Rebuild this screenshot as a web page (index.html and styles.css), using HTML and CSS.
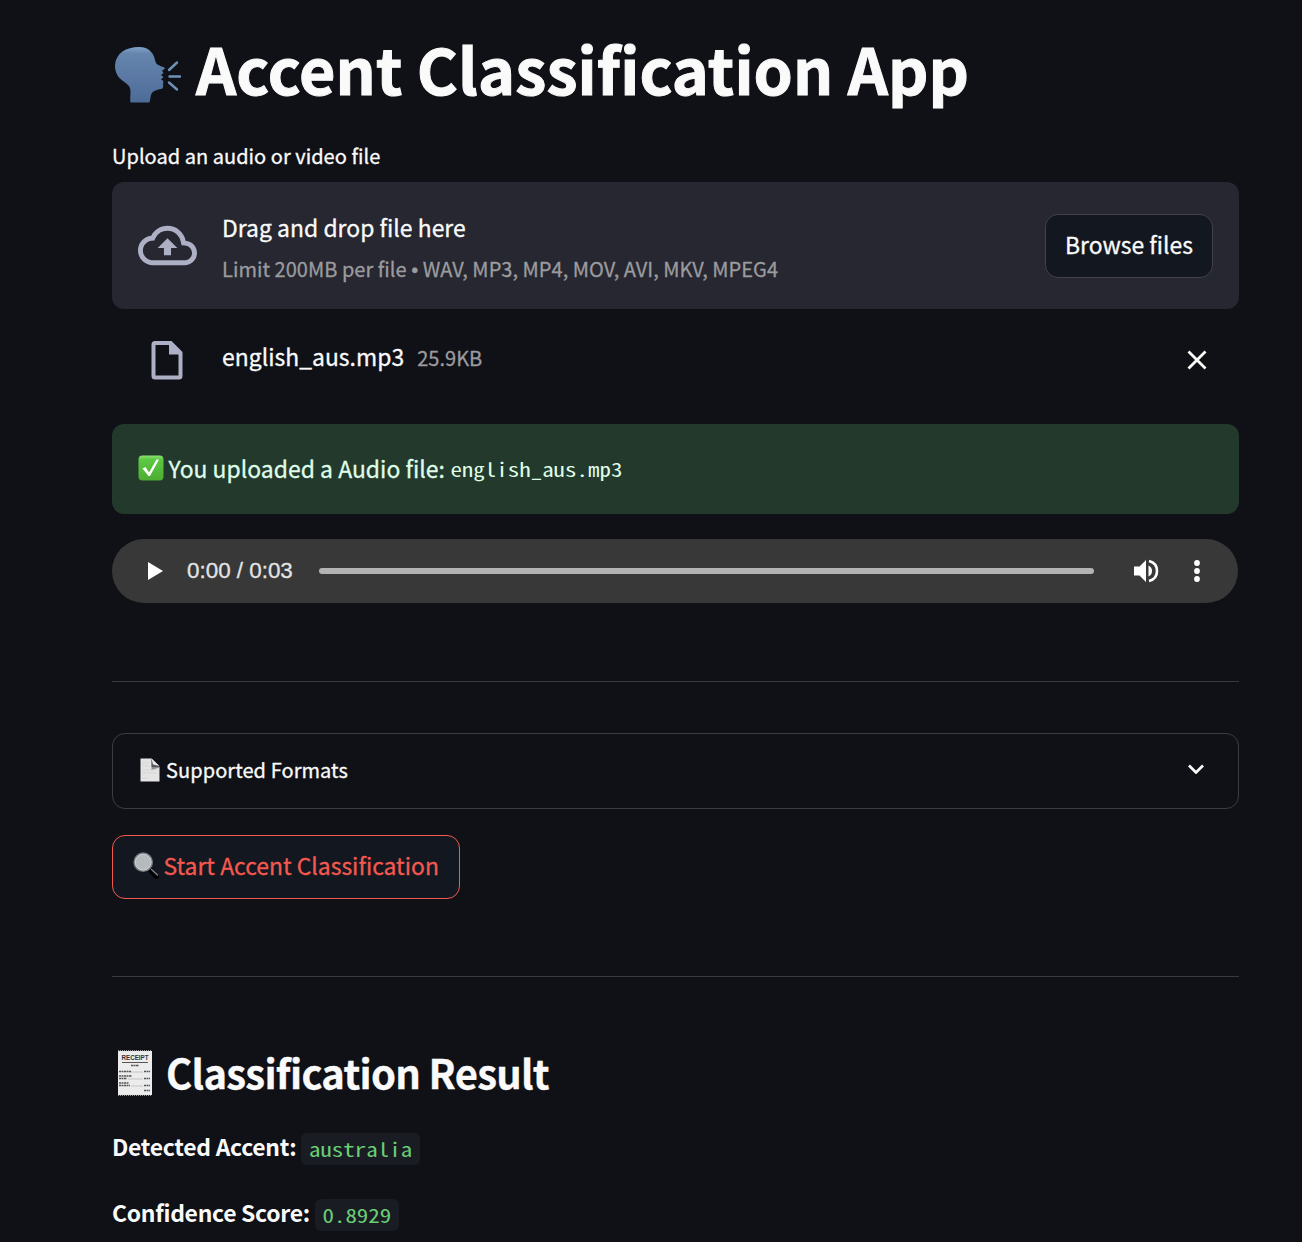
FILE: index.html
```html
<!DOCTYPE html>
<html lang="en">
<head>
<meta charset="utf-8">
<title>Accent Classification App</title>
<link rel="stylesheet" href="styles.css">
</head>
<body>
<main class="page">
  <h1 class="title">
    <svg class="title-icon" viewBox="0 0 72 62" aria-hidden="true">
      <defs><linearGradient id="head" x1="0" y1="0" x2="0" y2="1"><stop offset="0" stop-color="#7fa3cb"/><stop offset=".12" stop-color="#6685ad"/><stop offset="1" stop-color="#4d6b98"/></linearGradient></defs>
      <path fill="url(#head)" d="M27 2C37 2 42 8 43.500 17C44.500 20 49 21 52.500 22.500C53.500 23.500 51.500 25 50 25.500L51.500 28L49 30L51.500 32L49 34.500L51.500 36C50.500 39 52 42 50.500 43.500C45 45 41 45 39 50L37.500 57.500H18.500C17.500 51 20 46 17 41C12 35 3 34 3 20C4 8 14 2 27 2Z"/>
      <path fill="none" stroke="#6e92bb" stroke-width="2.400" stroke-linecap="round" d="M57 25L65 17.500M57.500 31.500H68M57 37.500L65 44.500"/>
    </svg>
    <span class="title-text">Accent Classification App</span>
  </h1>

  <p class="upload-label"><span>Upload an audio or video file</span></p>
  <section class="dropzone">
    <svg class="cloud" viewBox="0 0 24 24" aria-hidden="true"><path d="M19.350 10.040A7.490 7.490 0 0 0 12 4C9.110 4 6.600 5.640 5.350 8.040A5.994 5.994 0 0 0 0 14c0 3.310 2.690 6 6 6h13c2.760 0 5-2.240 5-5 0-2.640-2.050-4.780-4.650-4.960zM19 18H6c-2.210 0-4-1.790-4-4 0-2.050 1.530-3.760 3.560-3.970l1.070-.110.500-.950A5.469 5.469 0 0 1 12 6c2.620 0 4.880 1.860 5.390 4.430l.300 1.500 1.530.110A2.980 2.980 0 0 1 22 15c0 1.650-1.350 3-3 3zM8 13h2.550v3h2.900v-3H16l-4-4z"/></svg>
    <div class="drop-text">
      <span class="drop-main">Drag and drop file here</span>
      <span class="drop-limit">Limit 200MB per file <span class="bullet">•</span> WAV, MP3, MP4, MOV, AVI, MKV, MPEG4</span>
    </div>
    <button class="browse"><span>Browse files</span></button>
  </section>

  <div class="file-row">
    <svg class="file-icon" viewBox="0 0 32 40" aria-hidden="true"><path fill-rule="evenodd" d="M4 1H20.500L31.500 12V36Q31.500 39.500 28 39.500H4Q.500 39.500 .500 36V4.500Q.500 1 4 1ZM4.500 5V35.500H27.500V14.500H18V5Z"/></svg>
    <span class="file-name">english_aus.mp3</span>
    <span class="file-size">25.9KB</span>
    <svg class="close" viewBox="0 0 20 20" aria-hidden="true"><path d="M1.500 1.500L18.500 18.500M18.500 1.500L1.500 18.500"/></svg>
  </div>

  <div class="success">
    <svg class="check" viewBox="0 0 26 26" aria-hidden="true">
      <defs><linearGradient id="green" x1="0" y1="0" x2="0" y2="1"><stop offset="0" stop-color="#8be474"/><stop offset=".15" stop-color="#5dc944"/><stop offset="1" stop-color="#4bad31"/></linearGradient></defs>
      <rect x=".500" y=".500" width="25" height="25" rx="4" fill="url(#green)"/>
      <path fill="#fff" d="M4.500 13.500L7.500 12L11 17.500L18.500 4.500H21L12 21H10.500Z"/>
    </svg>
    <span class="success-text">You uploaded a Audio file:</span>
    <code class="success-code"><span class="mono">english_aus.mp3</span></code>
  </div>

  <div class="player">
    <svg class="play" viewBox="0 0 15 18" aria-hidden="true"><path d="M0 0L15 9L0 18Z"/></svg>
    <span class="time">0:00 / 0:03</span>
    <div class="track"></div>
    <svg class="volume" viewBox="0 0 25 24" aria-hidden="true"><path d="M0 7.500H5.500L12 1V23L5.500 16.500H0Z"/><path d="M14.500 6.500Q18 8 18 12T14.500 17.500Z"/><path class="wave" d="M15 2Q23 4 23 12T15 22"/></svg>
    <svg class="more" viewBox="0 0 6 22" aria-hidden="true"><circle cx="3" cy="3" r="2.900"/><circle cx="3" cy="11" r="2.900"/><circle cx="3" cy="19" r="2.900"/></svg>
  </div>

  <hr class="rule rule-first">

  <div class="expander">
    <svg class="doc" viewBox="0 0 20 24" aria-hidden="true">
      <path fill="#e4e4e4" d="M.500 .500H11.500L19.500 9V23.500H.500Z"/>
      <path fill="#8c8c8c" d="M11.500 1V12L19.500 9.500Z"/><path fill="#55585b" d="M11.500 1V9H19.500Z"/><path fill="#e9e9e9" d="M11.500 .500L19.500 8L13 6.500Z"/>
      <path stroke="#d0d0d0" stroke-width=".700" d="M2 5H9M2 8H9M2 12H17M2 15H17M2 20H8"/>
    </svg>
    <span class="expander-text">Supported Formats</span>
    <svg class="chevron" viewBox="0 0 16 10" aria-hidden="true"><path d="M1 1.500L8 8.500L15 1.500"/></svg>
  </div>

  <button class="start">
    <svg class="lens" viewBox="0 0 26 27" aria-hidden="true">
      <path stroke="#000" stroke-width="4.800" stroke-linecap="round" d="M18 19L23.500 24.500"/><path stroke="#858a8e" stroke-width="1.300" stroke-linecap="round" d="M18.500 17.500L24.500 23"/>
      <circle cx="10.200" cy="10.200" r="9" fill="#b7babd" stroke="#71777d" stroke-width="1.800"/><circle cx="10.200" cy="10.200" r="8" fill="none" stroke="#d9dcde" stroke-width=".800"/>
    </svg>
    <span class="start-text">Start Accent Classification</span>
  </button>

  <hr class="rule rule-second">

  <h2 class="result-title">
    <svg class="receipt" viewBox="0 0 36 46" aria-hidden="true">
      <rect x="1" y="1" width="34" height="44" fill="#ececec"/><path fill="none" stroke="#b9b9b9" stroke-width="1" stroke-dasharray="1 1" d="M1 .700H35M1 45.300H35"/>
      <text x="4.500" y="9.500" textLength="27" lengthAdjust="spacingAndGlyphs">RECEIPT</text>
      <path stroke="#555" stroke-width="1" d="M5 12.500H31"/>
      <path stroke="#555" stroke-width="1.300" stroke-dasharray="2 .500" d="M14 15.500H22M2 21.500H14M27 21.500H33M2 26H15M2 28.500H10M27 28.500H33M2 33H12M2 35.500H13M27 35.500H33M27 40.500H33"/>
      <path stroke="#bbb" stroke-width=".800" d="M14 22H26M11 29H26M14 36H26"/>
    </svg>
    <span class="result-text">Classification Result</span>
  </h2>
  <p class="result-row"><strong class="accent-label">Detected Accent:</strong><code class="chip"><span class="mono">australia</span></code></p>
  <p class="result-row"><strong class="score-label">Confidence Score:</strong><code class="chip"><span class="mono">0.8929</span></code></p>
</main>
</body>
</html>
```
FILE: styles.css
```css
* { box-sizing: border-box; }
html { background: #0f1116; }
body {
  margin: 0;
  height: 1242px;
  overflow: hidden;
  background: #0f1116;
  color: #fafafa;
  font-family: "Noto Sans CJK SC", "Noto Sans", sans-serif;
  font-size: 22.9px;
  letter-spacing: .03px;
  -webkit-text-stroke: .3px currentColor;
}
.page { display: flex; flex-direction: column; width: 1127px; margin-left: 112px; }
h1, h2, p { margin: 0; }
svg { display: block; flex: none; }
span, strong, code { white-space: nowrap; }
button { font: inherit; color: inherit; letter-spacing: 0; }
code { font-family: "Noto Sans Mono CJK SC", "Liberation Mono", monospace; font-size: 22.95px; line-height: 32px; letter-spacing: 0; -webkit-text-stroke: 0; }
/* flattens the tall condensed glyphs to a wider code face */
.mono { display: block; transform: scaleY(.82); }

.title { display: flex; align-items: center; height: 142px; -webkit-text-stroke: 1px currentColor; }
.title-icon { width: 72px; height: 62px; margin-top: 10px; }
.title-text { margin: 0 0 7px 12px; font-size: 62.8px; line-height: 84px; font-weight: 700; letter-spacing: .1px; }

.upload-label { height: 40px; font-size: 20px; line-height: 27px; }

.dropzone { display: flex; align-items: center; height: 127px; padding: 0 26px; border-radius: 12px; background: #262730; }
.cloud { width: 59px; height: 59px; fill: #adb0c4; }
.drop-text { display: flex; flex-direction: column; flex: 1; margin: 5px 0 0 25px; }
.drop-main { line-height: 41px; }
.drop-limit { font-size: 20px; line-height: 41px; color: #9b9b9f; }
.bullet { font-family: "Liberation Sans", sans-serif; line-height: 1; }
.browse { width: 168px; height: 64px; padding: 0 0 4px; border: 1px solid #41424b; border-radius: 13px; background: #131720; }

.file-row { display: flex; align-items: center; height: 102px; padding: 0 32px 0 39px; }
.file-icon { width: 32px; height: 40px; fill: #adb0c4; }
.file-name { margin-left: 39px; line-height: 34px; margin-bottom: 8px; }
.file-size { margin-left: 13px; font-size: 20px; line-height: 34px; color: #9b9b9f; margin-bottom: 4px; }
.close { width: 20px; height: 20px; margin-left: auto; fill: none; stroke: #fafafa; stroke-width: 2.800; }

.success { display: flex; align-items: center; height: 90px; margin-top: 13px; padding-left: 26px; border-radius: 12px; background: #23392b; color: #dffde9; }
.check { width: 26px; height: 26px; margin-bottom: 2px; }
.success-text { margin: 0 0 2px 4.500px; }
.success-code { margin: 0 0 0 5.500px; }

.player { display: flex; align-items: center; width: 1126px; height: 64px; margin-top: 25px; padding: 0 38px 0 36px; border-radius: 32px; background: #373837; }
.play { width: 15px; height: 18px; fill: #fff; }
.time { width: 132px; margin-left: 24px; margin-bottom: 1px; color: #e4e4e4; font: 22.4px/30px "Liberation Sans", sans-serif; letter-spacing: 0; }
.track { flex: 1; height: 6px; border-radius: 3px; background: #b3b3b3; }
.volume { width: 25px; height: 24px; margin-left: 40px; fill: #fff; }
.wave { fill: none; stroke: #fff; stroke-width: 2.600; }
.more { width: 6px; height: 22px; margin-left: 35px; fill: #fff; }

.rule { width: 100%; height: 1px; margin: 0; border: 0; background: #393a3f; }
.rule-first { margin-top: 78px; }
.rule-second { margin-top: 77px; }

.expander { display: flex; align-items: center; height: 76px; margin-top: 51px; padding: 0 34px 0 27px; border: 1px solid #3c3d42; border-radius: 13px; }
.doc { width: 20px; height: 24px; margin-bottom: 3px; }
.expander-text { margin: 0 0 2px 6px; font-size: 20px; line-height: 30px; letter-spacing: .07px; }
.chevron { width: 16px; height: 10px; margin-left: auto; margin-bottom: 5px; fill: none; stroke: #fafafa; stroke-width: 2.700; }

.start { display: flex; align-items: center; width: 348px; height: 64px; margin-top: 26px; padding: 0 0 0 20px; border: 1px solid #f4594f; border-radius: 13px; background: #131720; color: #f4594f; }
.lens { width: 26px; height: 27px; margin-bottom: 4px; }
.start-text { margin: 0 0 4px 4.500px; }

.result-title { display: flex; align-items: center; height: 60px; margin-top: 67px; padding-left: 5px; font-size: 40px; font-weight: 700; }
.receipt { width: 36px; height: 46px; margin-bottom: 2px; }
.receipt text { font: 700 7px "Liberation Sans", sans-serif; fill: #333; letter-spacing: 0; -webkit-text-stroke: 0; }
.result-text { margin: 0 0 4px 13px; line-height: 60px; letter-spacing: -.73px; }
.result-row { display: flex; align-items: center; height: 66px; }
.result-title + .result-row { margin-top: 11px; }
.result-row strong { margin-bottom: 4px; font-weight: 700; letter-spacing: -.27px; -webkit-text-stroke: 0; }
.chip { height: 32px; margin: 2px 0 0 5px; padding: 0 7.500px; border-radius: 6px; background: #1a1c24; color: #69cf75; }
```
